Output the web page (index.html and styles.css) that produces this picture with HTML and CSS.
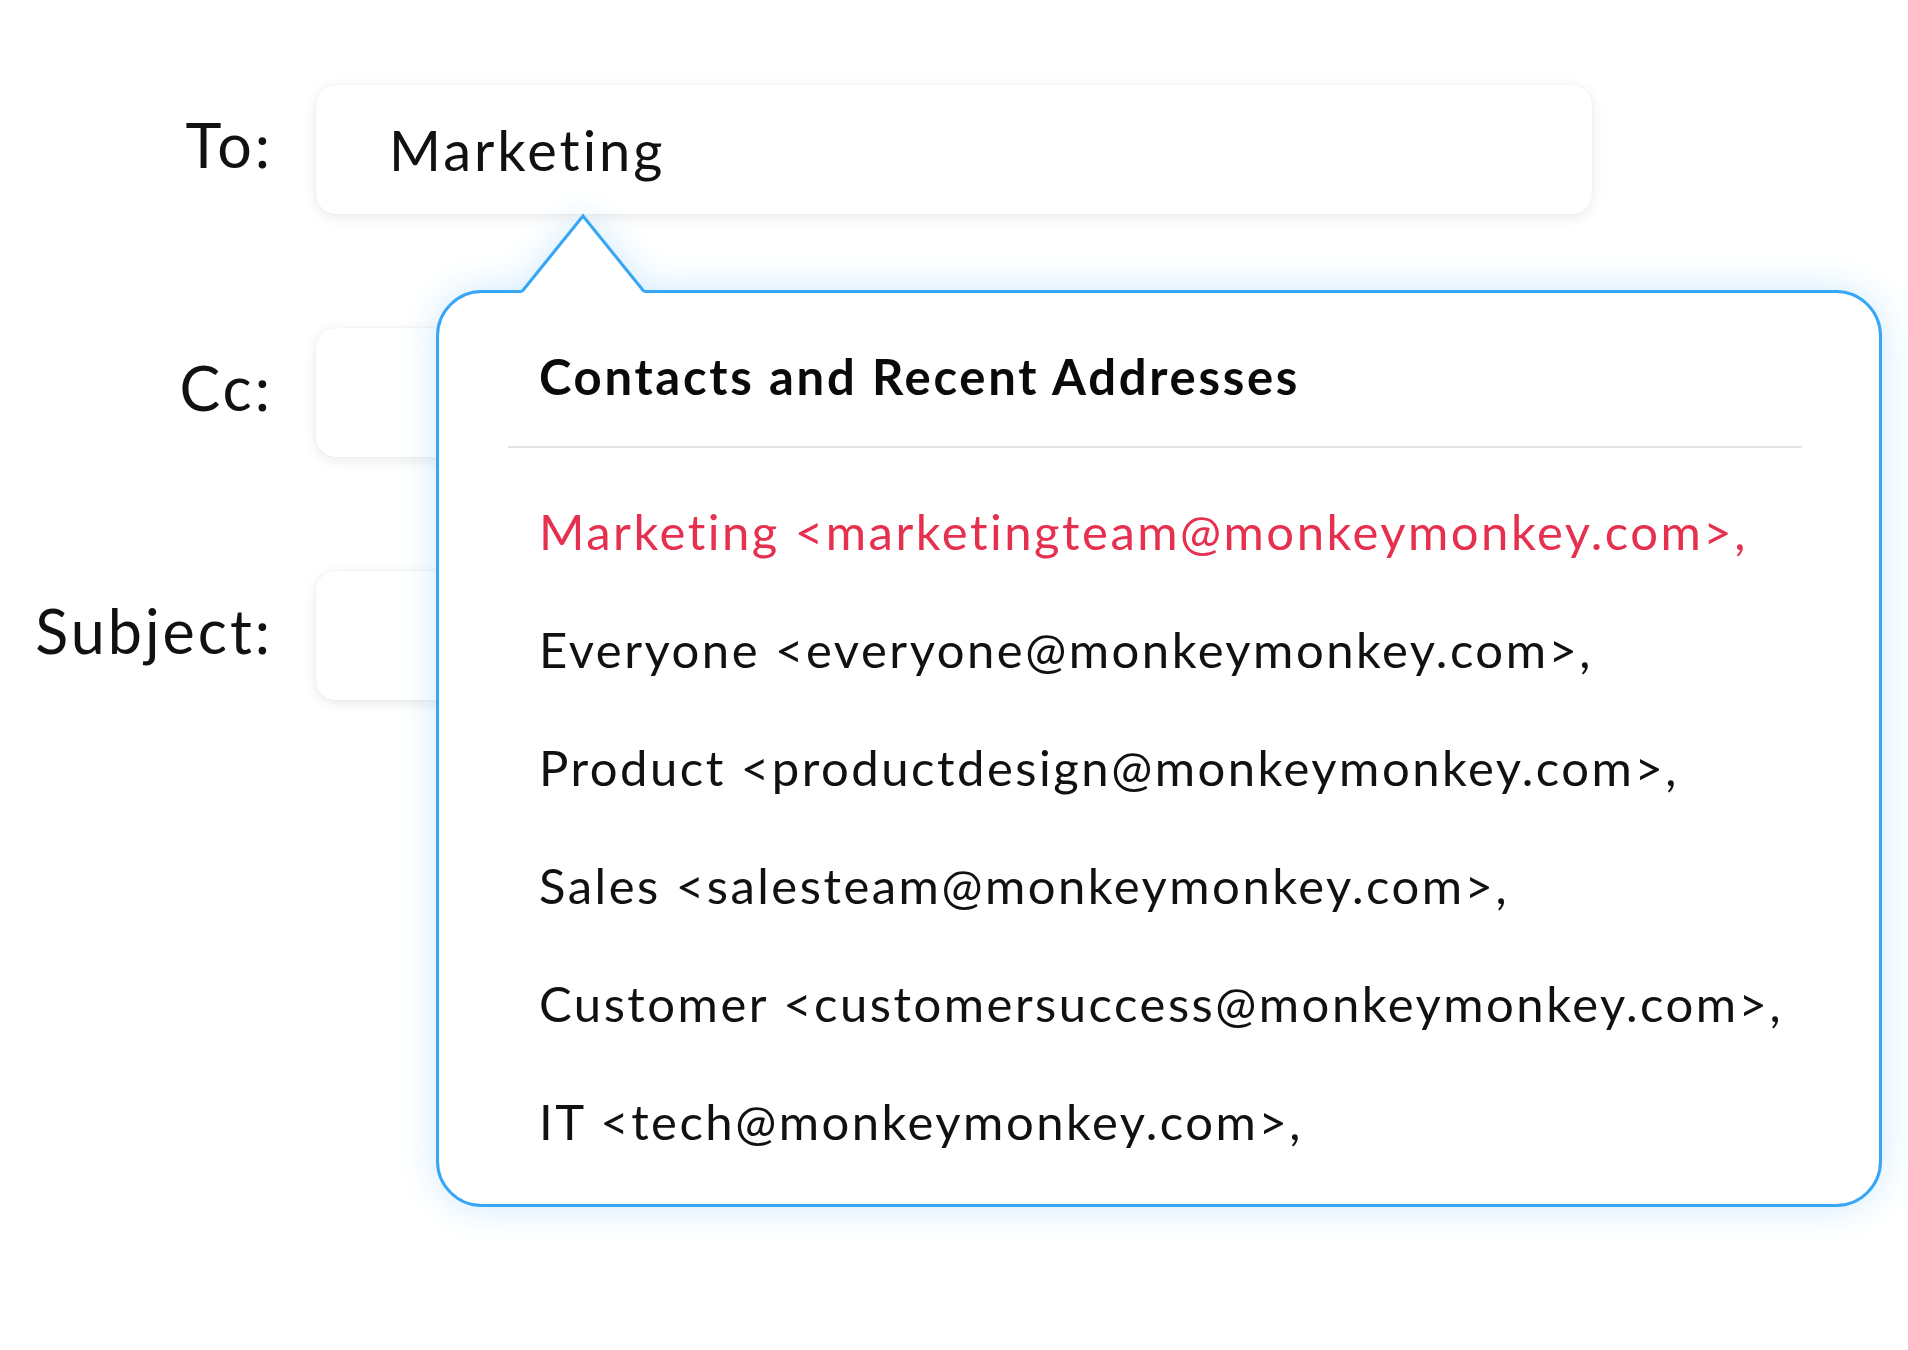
FILE: index.html
```html
<!DOCTYPE html>
<html lang="en">
<head>
<meta charset="utf-8">
<title>Compose</title>
<link rel="stylesheet" href="styles.css">
</head>
<body>
<div class="compose">
  <div class="form">
    <div class="label">To:</div>
    <div class="field">Marketing</div>
    <div class="label">Cc:</div>
    <div class="field"></div>
    <div class="label">Subject:</div>
    <div class="field"></div>
  </div>
  <div class="suggest">
    <svg class="caret" width="132" height="84" viewBox="0 0 132 84">
      <polygon points="6,79.5 67,4 128,79.5 128,82 6,82" fill="#fff"/>
      <polyline points="6,79.5 67,4 128,79.5" fill="none" stroke="#36a6f5" stroke-width="3"/>
    </svg>
    <h2 class="suggest-title">Contacts and Recent Addresses</h2>
    <ul class="suggest-list">
      <li class="active">Marketing &lt;marketingteam@monkeymonkey.com&gt;,</li>
      <li>Everyone &lt;everyone@monkeymonkey.com&gt;,</li>
      <li>Product &lt;productdesign@monkeymonkey.com&gt;,</li>
      <li>Sales &lt;salesteam@monkeymonkey.com&gt;,</li>
      <li>Customer &lt;customersuccess@monkeymonkey.com&gt;,</li>
      <li>IT &lt;tech@monkeymonkey.com&gt;,</li>
    </ul>
  </div>
</div>
</body>
</html>
```

FILE: styles.css
```css
html, body {
  margin: 0;
  padding: 0;
  background: #fff;
}

body {
  font-family: Lato, "Liberation Sans", sans-serif;
  color: #111;
  width: 1908px;
  height: 1350px;
  overflow: hidden;
}

.compose {
  position: relative;
  width: 1908px;
  height: 1350px;
}

.form {
  display: grid;
  grid-template-columns: 270px 1276px;
  grid-auto-rows: 129px;
  column-gap: 46px;
  row-gap: 114px;
  padding-top: 85px;
}

.label {
  font-size: 61px;
  line-height: 119px;
  text-align: right;
  letter-spacing: 3px;
  margin-right: -3px;
}

.field {
  background: #fff;
  border-radius: 20px;
  box-shadow: 0 3px 14px rgba(0, 0, 0, 0.09), 0 0 2px rgba(0, 0, 0, 0.06);
  font-size: 56px;
  line-height: 129px;
  padding-left: 73px;
  letter-spacing: 3px;
}

.suggest {
  position: absolute;
  left: 436px;
  top: 290px;
  width: 1446px;
  box-sizing: border-box;
  border: 3px solid #36a6f5;
  border-radius: 46px;
  background: #fff;
  padding: 53px 77px 24px 69px;
  filter: drop-shadow(0 0 18px rgba(54, 166, 245, 0.24));
}

.caret {
  position: absolute;
  left: 77px;
  top: -81px;
  display: block;
}

.suggest-title {
  margin: 0;
  padding: 0 0 40px 31px;
  border-bottom: 2px solid #e4e4e4;
  font-size: 49px;
  font-weight: 700;
  line-height: 60px;
  letter-spacing: 2.7px;
  color: #0a0a0a;
}

.suggest-list {
  list-style: none;
  margin: 24px 0 0;
  padding: 0 0 0 31px;
}

.suggest-list li {
  font-size: 49px;
  line-height: 118px;
  letter-spacing: 2.5px;
  white-space: nowrap;
}

.suggest-list .active {
  color: #e6304f;
}
```
